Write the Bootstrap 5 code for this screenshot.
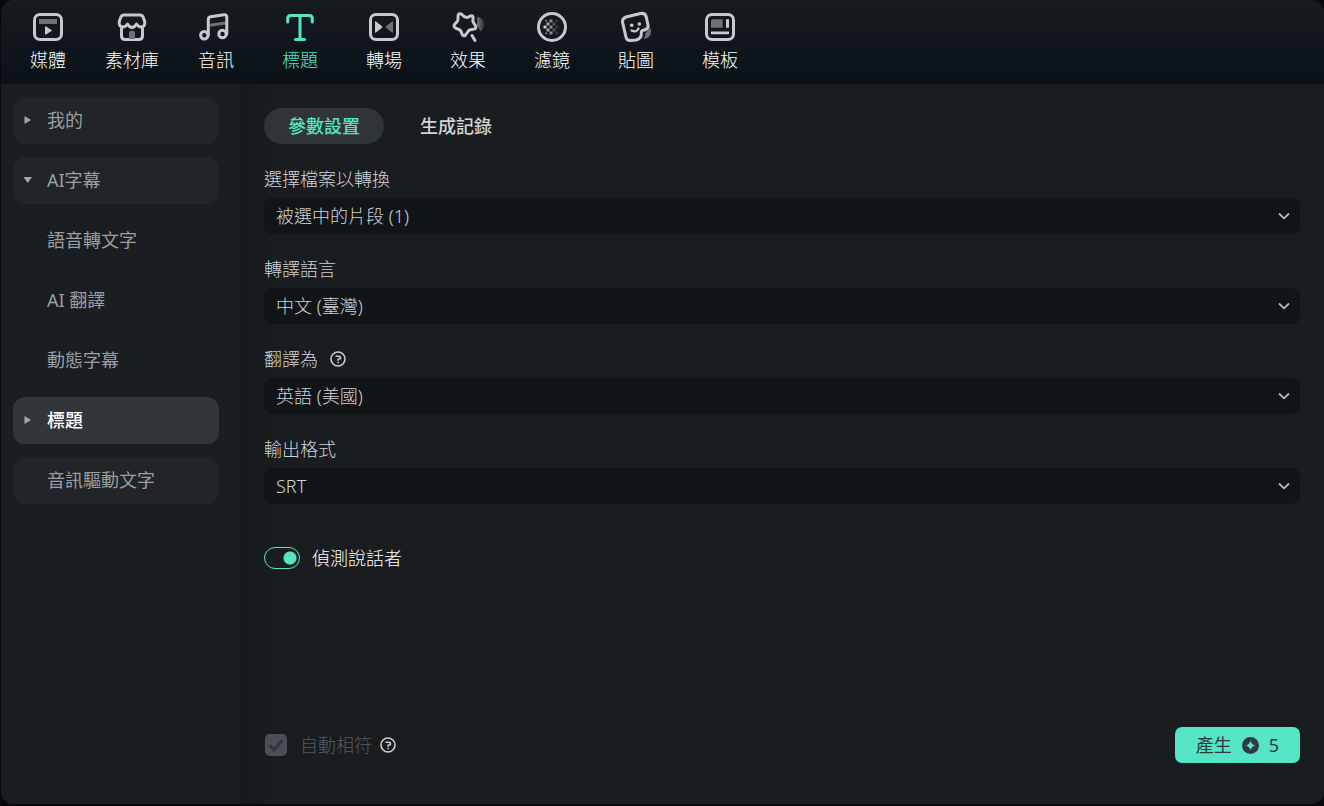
<!DOCTYPE html>
<html lang="zh-Hant" data-bs-theme="dark">
<head>
<meta charset="utf-8">
<meta name="viewport" content="width=device-width, initial-scale=1">
<title>標題</title>
<link href="https://cdn.jsdelivr.net/npm/bootstrap@5.3.0/dist/css/bootstrap.min.css" rel="stylesheet">
<style>
  :root { --accent: #55e5c5; --ink: #cfd3d7; --dim: #9a9fa3; }
  body { background: #07090c; color: var(--ink); font-family: "Noto Sans", "Noto Sans CJK TC", sans-serif; font-size: 18px; line-height: 24px; font-weight: 300; }
  .shell { background: #1a1d1f; border-radius: 14px; overflow: hidden; border: solid #07090c; border-width: 0 0 2px 1px; }
  .topbar { height: 84px; padding: 11px 0 0 5px; background: linear-gradient(#161b1e, #0a1219); }
  .tool { width: 84px; color: #fff; text-decoration: none; gap: 5px; }
  .tool svg { width: 32px; height: 32px; overflow: visible; fill: none; stroke: #c6cad0; stroke-width: 3; stroke-linecap: round; stroke-linejoin: round; }
  .tool.active { color: var(--accent); }
  .tool.active svg { stroke: var(--accent); }
  .tool .ghost { fill: #6c7077; stroke: none; }
  .tool .solid { fill: #c6cad0; stroke: none; }
  .side { width: 239px; padding: 13px 21px 0 12px; gap: 13px; background: #1a1e20; }
  .side-item { height: 47px; padding: 0 0 1px 34px; border-radius: 12px; color: var(--dim); text-decoration: none; font-weight: 400; position: relative; }
  .side-item.box { background: #212527; }
  .side-item.active { background: #323639; color: #fff; font-weight: 500; }
  .side-item svg { position: absolute; left: 10px; width: 10px; height: 10px; fill: #a4a8ab; }
  .stage { padding: 24px 24px 41px; background: linear-gradient(90deg, #15191b, #1a1d1f 36px); }
  .tabs { gap: 12px; margin-bottom: 23px; }
  .pill { height: 36px; padding: 0 24px; border: 0; border-radius: 18px; background: none; color: #d2d5d8; font-weight: 500; }
  .pill.active { background: #303437; color: var(--accent); }
  .field-label { height: 24px; margin-bottom: 7px; }
  .field { margin-bottom: 23px; }
  .pick { height: 36px; padding: 0 36px 0 12px; border: 0; border-radius: 8px; color: var(--ink); font-size: 18px; line-height: 36px; font-weight: 300;
    background: #111517 url("data:image/svg+xml,%3Csvg xmlns='http://www.w3.org/2000/svg' viewBox='0 0 12 12'%3E%3Cpath d='M1 3.500 6 8.300l5-4.800' fill='none' stroke='%23b9bcbf' stroke-width='1.800'/%3E%3C/svg%3E") no-repeat right 10px center / 12px 12px; }
  .speaker { margin-top: 19px; gap: 12px; color: #fff; }
  .switch { width: 36px; height: 22px; margin: 0; appearance: none; border: 1px solid var(--accent); border-radius: 11px; background: radial-gradient(circle at 25px 10px, var(--accent) 6px, transparent 7px); }
  .tick { appearance: none; width: 22px; height: 22px; margin: 0 1px; border-radius: 5px; 
    background: #4a5056 url("data:image/svg+xml,%3Csvg xmlns='http://www.w3.org/2000/svg' viewBox='0 0 22 22'%3E%3Cpath d='m4.500 11 4.500 5 8.500-10' fill='none' stroke='%2330363b' stroke-width='2.800'/%3E%3C/svg%3E"); }
  .faint { color: #555a5f; }
  .help { padding: 0; border: 0; background: none; line-height: 0; }
  .help svg { width: 16px; height: 16px; fill: none; stroke: #c9ccd0; stroke-width: 1.6; }
  .make { height: 36px; padding: 0 21px; gap: 10px; border: 0; border-radius: 7px; background: var(--accent); color: #2e3a40; font-size: 18px; font-weight: 400; }
</style>
</head>
<body>
<div class="shell min-vh-100 d-flex flex-column">
  <nav class="topbar d-flex">
    <a href="#" class="tool d-flex flex-column align-items-center"><svg viewBox="0 0 32 32"><rect x="2.500" y="3.500" width="27" height="25" rx="5.500"/><path class="ghost" d="M7 8h18v5H7z"/><path class="solid" d="M13 16q0-1 1-.5l5.500 3.500q.8.500 0 1l-5.500 3.500q-1 .5-1-.5z"/></svg>媒體</a>
    <a href="#" class="tool d-flex flex-column align-items-center"><svg viewBox="0 0 32 32"><path d="M5.500 15.500V25q0 3.500 3.500 3.500h14q3.500 0 3.500-3.500v-9.500M8 4h16q2.300 0 3.200 2.300l1.500 4.200q.8 5.500-3.700 5.500-2.500 0-4.500-3-2 3.500-4.500 3.500T11.500 13q-2 3-4.500 3-4.500 0-3.700-5.500l1.500-4.200Q5.700 4 8 4z"/><path class="ghost" d="M13 28v-5.500a3 3 0 0 1 6 0V28z"/></svg>素材庫</a>
    <a href="#" class="tool d-flex flex-column align-items-center"><svg viewBox="0 0 32 32"><path d="M10 14.300 25.500 12" stroke="#6c7077" stroke-linecap="butt"/><circle cx="4.300" cy="24.300" r="3.700"/><circle cx="22.500" cy="23" r="3.700"/><path d="M8.300 24V8.500q0-2.300 2.300-2.700l13.200-2q3-.5 3 2.200V23"/></svg>音訊</a>
    <a href="#" class="tool active d-flex flex-column align-items-center" aria-current="page"><svg viewBox="0 0 32 32"><path d="M3.700 11V7.500q0-3 3-3h18.600q3 0 3 3V11M16 4.500v24M11.500 28.500h9"/></svg>標題</a>
    <a href="#" class="tool d-flex flex-column align-items-center"><svg viewBox="0 0 32 32"><rect x="2.500" y="3.500" width="27" height="25" rx="5.500"/><path class="solid" d="M7 11q0-1 1-.5l6 4.700q.8.800 0 1.600l-6 4.700q-1 .5-1-.5z"/><path class="ghost" d="M25 11q0-1-1-.5l-6 4.700q-.8.800 0 1.600l6 4.700q1 .5 1-.5z"/></svg>轉場</a>
    <a href="#" class="tool d-flex flex-column align-items-center"><svg viewBox="0 0 32 32"><defs><linearGradient id="fade"><stop stop-color="#777b80"/><stop offset="1" stop-color="#777b80" stop-opacity=".1"/></linearGradient></defs><path d="M25.500 5.500q7 2.500 7.500 8.500-1 4-4.500 6.500L25 14z" fill="url(#fade)" stroke="none"/><path d="M14 6.300Q16 6.700 18.500 5 21.500 4 21 7.500 20.300 10.500 22 12.500L23.600 15Q25 18 21 18.300 17.500 18.300 16 20.500L13.500 24Q11 26.200 9.800 22.500 9 19 6.500 18.300L3.500 17Q.5 15 3.300 12.500 6 10.500 6 8.500V5Q6.500 1.700 9.500 3.200 12 5.700 14 6.300zM20 24.500l3 5"/></svg>效果</a>
    <a href="#" class="tool d-flex flex-column align-items-center"><svg viewBox="0 0 32 32"><circle cx="16" cy="16" r="13.500"/><g class="solid"><path d="M7.500 14.500h3v3h-3z"/><path opacity=".8" d="M10.500 11.500h3v3h-3zm0 6h3v3h-3zM9.500 9h1.500v1.500H9.500zm0 12.500h1.500V23H9.500z"/><path opacity=".65" d="M13.500 8.500h3v3h-3zm0 6h3v3h-3zm0 6h3v3h-3z"/><path opacity=".35" d="M16.500 11.500h3v3h-3zm0 6h3v3h-3z"/><path opacity=".18" d="M19.500 8.500h3v3h-3zm0 6h3v3h-3zm0 6h3v3h-3z"/></g></svg>濾鏡</a>
    <a href="#" class="tool d-flex flex-column align-items-center"><svg viewBox="0 0 32 32"><path class="ghost" d="M31 17v4q-.5 6-7 7l2-7z"/><path d="M16 29l-5 .5q-4 .6-5-3.300L2.700 12Q1.800 7.500 6 6l14.500-3.500q4.500-.8 5.700 3.200L28 14q.7 3.500-2.300 4.500l-2.400.7q-2.300.8-2 3.200.7 5-5.300 6.600z"/><path d="M11.500 19.500q5 2.500 7-2" stroke-width="2.200"/><circle class="solid" cx="11.700" cy="14.300" r="1.800"/><circle class="solid" cx="19.300" cy="13" r="1.800"/></svg>貼圖</a>
    <a href="#" class="tool d-flex flex-column align-items-center"><svg viewBox="0 0 32 32"><rect x="2.500" y="3.500" width="27" height="25" rx="5.500"/><path class="ghost" d="M9 8.300h9.700v8.500H7v-6.500q0-2 2-2z"/><path class="solid" d="M22 8.300h3v8.500h-3zM7 20.500h18v2.800H7z"/></svg>模板</a>
  </nav>
  <div class="d-flex flex-grow-1">
    <aside class="side d-flex flex-column flex-shrink-0">
      <a href="#" class="side-item box d-flex align-items-center"><svg viewBox="0 0 10 10"><path d="M1.500 1 8 5 1.500 9z"/></svg>我的</a>
      <a href="#" class="side-item box d-flex align-items-center"><svg viewBox="0 0 10 10"><path d="M.5 2h8.500L4.800 8z"/></svg>AI字幕</a>
      <a href="#" class="side-item d-flex align-items-center">語音轉文字</a>
      <a href="#" class="side-item d-flex align-items-center">AI 翻譯</a>
      <a href="#" class="side-item d-flex align-items-center">動態字幕</a>
      <a href="#" class="side-item active d-flex align-items-center"><svg viewBox="0 0 10 10"><path d="M1.500 1 8 5 1.500 9z"/></svg>標題</a>
      <a href="#" class="side-item box d-flex align-items-center">音訊驅動文字</a>
    </aside>
    <main class="stage flex-grow-1 d-flex flex-column">
      <div class="tabs d-flex">
        <button type="button" class="pill active">參數設置</button>
        <button type="button" class="pill">生成記錄</button>
      </div>
      <div class="field"><label class="field-label d-block" for="file">選擇檔案以轉換</label>
        <select id="file" class="pick form-select"><option>被選中的片段 (1)</option></select></div>
      <div class="field"><label class="field-label d-block" for="from">轉譯語言</label>
        <select id="from" class="pick form-select"><option>中文 (臺灣)</option></select></div>
      <div class="field"><div class="field-label d-flex align-items-center gap-2"><label class="me-1" for="to">翻譯為</label>
        <button type="button" class="help" aria-label="說明"><svg viewBox="0 0 16 16"><circle cx="8" cy="8" r="7"/><path d="M5.500 5.300h3q2 0 2 1.400T8.200 8.200v1.600M8.200 10.700v1.600"/></svg></button></div>
        <select id="to" class="pick form-select"><option>英語 (美國)</option></select></div>
      <div class="field"><label class="field-label d-block" for="format">輸出格式</label>
        <select id="format" class="pick form-select"><option>SRT</option></select></div>
      <div class="speaker d-flex align-items-center">
        <input id="speaker" class="switch" type="checkbox" role="switch" checked><label for="speaker">偵測說話者</label>
      </div>
      <div class="d-flex align-items-center mt-auto">
        <input id="auto" class="tick" type="checkbox" checked disabled><label for="auto" class="faint ms-2 ps-1 me-2">自動相符</label>
        <button type="button" class="help" aria-label="說明"><svg viewBox="0 0 16 16"><circle cx="8" cy="8" r="7"/><path d="M5.500 5.300h3q2 0 2 1.400T8.200 8.200v1.600M8.200 10.700v1.600"/></svg></button>
        <button type="button" class="make d-flex align-items-center ms-auto"><span>產生</span><svg width="17" height="17" viewBox="0 0 17 17"><circle cx="8.500" cy="8.500" r="8.500" fill="#2e3a40"/><path d="M8.500 3.500Q9.300 7.700 13.500 8.500 9.300 9.300 8.500 13.500 7.700 9.300 3.500 8.500 7.700 7.700 8.500 3.500z" fill="#55e5c5"/></svg><span>5</span></button>
      </div>
    </main>
  </div>
</div>
<script src="https://cdn.jsdelivr.net/npm/bootstrap@5.3.0/dist/js/bootstrap.bundle.min.js"></script>
</body>
</html>
